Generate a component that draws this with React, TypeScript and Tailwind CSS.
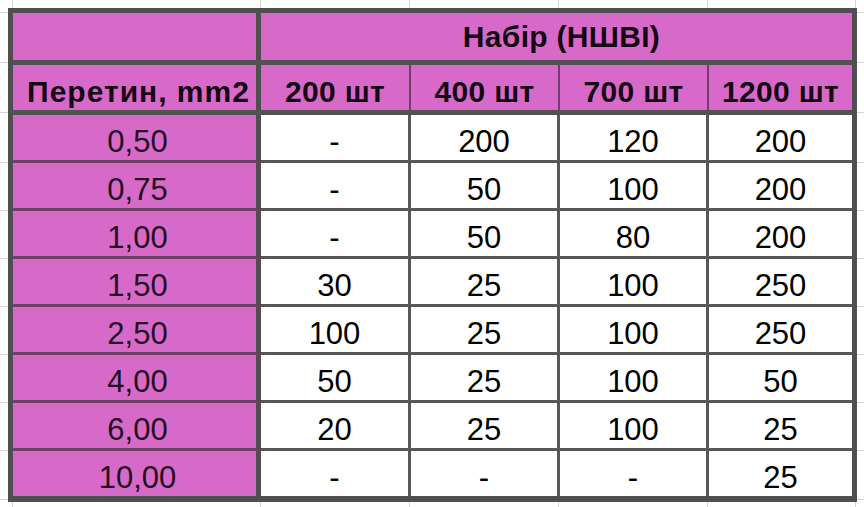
const font = { fontFamily: '"Liberation Sans", Arial, sans-serif' };

const rows = [
  ['0,50', '-', '200', '120', '200'],
  ['0,75', '-', '50', '100', '200'],
  ['1,00', '-', '50', '80', '200'],
  ['1,50', '30', '25', '100', '250'],
  ['2,50', '100', '25', '100', '250'],
  ['4,00', '50', '25', '100', '50'],
  ['6,00', '20', '25', '100', '25'],
  ['10,00', '-', '-', '-', '25'],
];

const sizes = ['200 шт', '400 шт', '700 шт', '1200 шт'];

// spreadsheet gridlines around the table
const colLines = ['w-[13px]', 'w-[248px]', 'w-[149px]', 'w-[149px]', 'w-[149px]', 'w-[148px]'];
const rowLines = [5, 50, 50, 50, 48, 48, 48, 48, 48, 48, 49];

function ColStrip({ h }: { h: string }) {
  return (
    <div className={`flex ${h}`}>
      {colLines.map((w, i) => (
        <div key={i} className={`${w} shrink-0 border-r border-[#d6d6d6]`} />
      ))}
      <div className="flex-1" />
    </div>
  );
}

function RowStrip({ w }: { w: string }) {
  return (
    <div className={`flex flex-col ${w} shrink-0`}>
      {rowLines.map((h, i) => (
        <div key={i} className="border-b border-[#d6d6d6]" style={{ height: h }} />
      ))}
    </div>
  );
}

const dataW = ['w-[150px] border-r-[3px]', 'w-[149px] border-r-[3px]', 'w-[149px] border-r-[3px]', 'w-[143px]'];
const headW = ['w-[150px] border-r-[2px]', 'w-[149px] border-r-[2px]', 'w-[149px] border-r-[2px]', 'w-[143px]'];

export default function App() {
  return (
    <div className="w-[864px] h-[507px] bg-white overflow-hidden" style={font}>
      <ColStrip h="h-[8px]" />
      <div className="flex">
        <RowStrip w="w-[8px]" />

        <div className="w-[849px] shrink-0 border-[5px] border-b-[6px] border-[#4f4f4f] text-[31px] leading-none">
          {/* Header: group title */}
          <div className="flex h-[52px] border-b-[5px] border-[#525252] bg-[#d76ac9]">
            <div className="w-[248px] border-r-[5px] border-[#4f4f4f]" />
            <div className="flex-1 flex items-end justify-center pb-[8px] pl-[10px] font-bold text-[30px] tracking-[0.3px] text-[#140612]">
              Набір (НШВІ)
            </div>
          </div>

          {/* Header: sizes */}
          <div className="flex h-[50px] border-b-[5px] border-[#525252] bg-[#d76ac9] font-bold text-[30px] text-[#140612]">
            <div className="w-[248px] border-r-[5px] border-[#4f4f4f] flex items-end justify-center pb-[3px] pl-[8px] tracking-[1px]">
              Перетин, mm2
            </div>
            {sizes.map((s, i) => (
              <div key={s} className={`${headW[i]} border-[#6e3f69] flex items-end justify-center pb-[3px] tracking-[0.3px]`}>
                {s}
              </div>
            ))}
          </div>

          {rows.map((r, ri) => {
            const last = ri === rows.length - 1;
            return (
              <div key={r[0]} className="flex h-[48px] last:h-[45px]">
                <div
                  className={`w-[248px] border-r-[5px] border-r-[#4f4f4f] bg-[#d76ac9] text-[#220c20] flex items-end justify-center pb-[3px] pl-[6px] ${
                    last ? '' : 'border-b-[3px] border-b-[#713d6b]'
                  }`}
                >
                  {r[0]}
                </div>
                {r.slice(1).map((v, ci) => (
                  <div
                    key={ci}
                    className={`${dataW[ci]} border-r-[#575757] text-black flex items-end justify-center pb-[3px] ${
                      last ? '' : 'border-b-[3px] border-b-[#575757]'
                    }`}
                  >
                    {v}
                  </div>
                ))}
              </div>
            );
          })}
        </div>

        <RowStrip w="flex-1" />
      </div>
      <ColStrip h="h-[8px]" />
    </div>
  );
}
